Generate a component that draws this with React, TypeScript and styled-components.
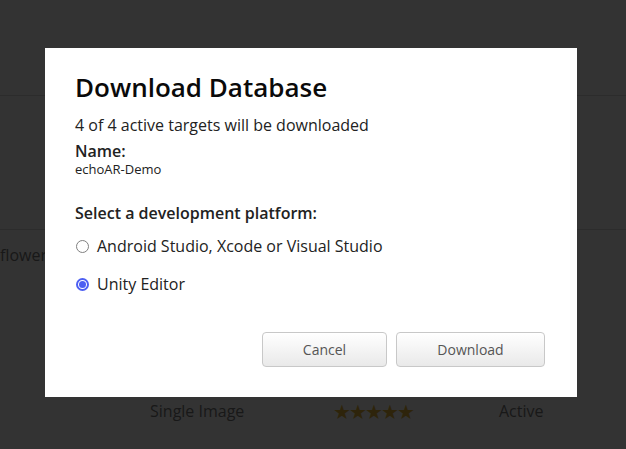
import React from "react";
import styled, { createGlobalStyle } from "styled-components";

const Global = createGlobalStyle`
  html, body { margin: 0; padding: 0; }
  body {
    width: 626px;
    height: 449px;
    overflow: hidden;
    font-family: "Open Sans", "Liberation Sans", sans-serif;
    background: #ffffff;
  }
`;

const Page = styled.div`
  position: relative;
  width: 626px;
  height: 449px;
  overflow: hidden;
  background: #ffffff;
`;

const Table = styled.div`
  display: flex;
  flex-direction: column;
  padding-top: 95px;
`;

const Rule = styled.div`
  height: 1px;
  background: #dcdcdc;
`;

const HeaderGap = styled.div`
  height: 133px;
`;

const Row = styled.div<{ $h: number }>`
  display: flex;
  align-items: center;
  height: ${(p) => p.$h}px;
  font-size: 16px;
  color: #7a7a7a;
`;

const Cell = styled.div<{ $w: number }>`
  width: ${(p) => p.$w}px;
  flex: none;
  white-space: nowrap;
`;

const Stars = styled.span`
  color: #e4b53a;
  font-size: 20px;
  letter-spacing: -2px;
`;

const Overlay = styled.div`
  position: absolute;
  inset: 0;
  background: rgba(0, 0, 0, 0.8);
`;

const Modal = styled.div`
  position: absolute;
  left: 45px;
  top: 48px;
  width: 532px;
  box-sizing: border-box;
  background: #ffffff;
  padding: 24px 32px 30px 30px;
  display: flex;
  flex-direction: column;
  color: #111;
`;

const Title = styled.h2`
  margin: 0;
  font-size: 26px;
  line-height: 30px;
  font-weight: 600;
  color: #0a0a0a;
`;

const Line = styled.div`
  margin-top: 12px;
  font-size: 16px;
  line-height: 22px;
  color: #222;
`;

const Label = styled.div<{ $mt?: number }>`
  margin-top: ${(p) => p.$mt ?? 0}px;
  font-size: 16px;
  line-height: 22px;
  font-weight: 600;
  color: #222;
`;

const Small = styled.div`
  margin-top: -1px;
  font-size: 13px;
  line-height: 16px;
  color: #222;
`;

const Options = styled.div`
  margin-top: 11px;
  display: flex;
  flex-direction: column;
  gap: 16px;
`;

const Option = styled.label`
  display: flex;
  align-items: center;
  gap: 8px;
  font-size: 16px;
  line-height: 22px;
  color: #222;
  cursor: pointer;
`;

const Radio = styled.span<{ $on?: boolean }>`
  width: 13px;
  height: 13px;
  margin-left: 1px;
  box-sizing: border-box;
  border-radius: 50%;
  border: ${(p) => (p.$on ? "2px solid #4d5ff2" : "1px solid #808080")};
  background: #fff;
  display: flex;
  align-items: center;
  justify-content: center;
  flex: none;
  &::after {
    content: "";
    width: 7px;
    height: 7px;
    border-radius: 50%;
    background: ${(p) => (p.$on ? "#4d5ff2" : "transparent")};
  }
`;

const Actions = styled.div`
  margin-top: 37px;
  display: flex;
  justify-content: flex-end;
  gap: 9px;
`;

const Button = styled.button<{ $w: number }>`
  width: ${(p) => p.$w}px;
  height: 35px;
  border: 1px solid #c8c8c8;
  border-radius: 4px;
  background: linear-gradient(#ffffff, #e9e9e9);
  font-family: "Open Sans", "Liberation Sans", sans-serif;
  font-size: 14px;
  color: #555;
  cursor: pointer;
`;

export default function App() {
  return (
    <>
      <Global />
      <Page>
        <Table>
          <Rule />
          <HeaderGap />
          <Rule />
          <Row $h={50}>
            <Cell $w={200}>flower</Cell>
          </Row>
          <Row $h={111}>
            <Cell $w={150}></Cell>
          </Row>
          <Row $h={40}>
            <Cell $w={150}></Cell>
            <Cell $w={183}>Single Image</Cell>
            <Cell $w={166}>
              <Stars>★★★★★</Stars>
            </Cell>
            <Cell $w={100}>Active</Cell>
          </Row>
        </Table>
        <Overlay />
        <Modal>
          <Title>Download Database</Title>
          <Line>4 of 4 active targets will be downloaded</Line>
          <Label $mt={4}>Name:</Label>
          <Small>echoAR-Demo</Small>
          <Label $mt={25}>Select a development platform:</Label>
          <Options>
            <Option>
              <Radio />
              Android Studio, Xcode or Visual Studio
            </Option>
            <Option>
              <Radio $on />
              Unity Editor
            </Option>
          </Options>
          <Actions>
            <Button $w={125}>Cancel</Button>
            <Button $w={149}>Download</Button>
          </Actions>
        </Modal>
      </Page>
    </>
  );
}
